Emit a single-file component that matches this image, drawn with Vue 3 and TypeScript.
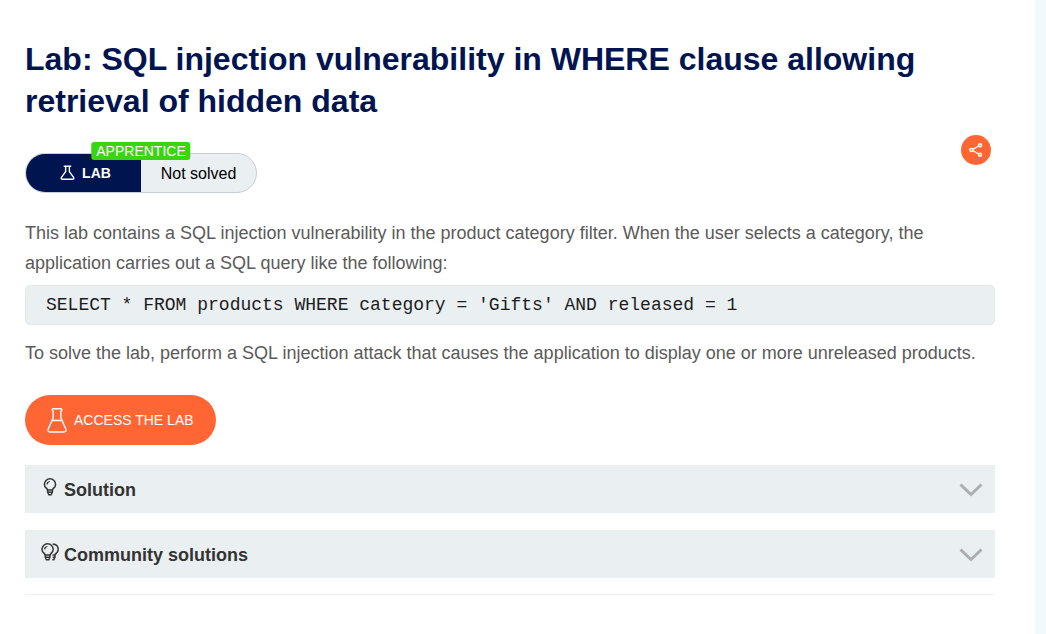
<script setup lang="ts">
import { ref } from 'vue'

interface Panel {
  id: string
  title: string
  double: boolean
}

const panels: Panel[] = [
  { id: 'solution', title: 'Solution', double: false },
  { id: 'community', title: 'Community solutions', double: true },
]

const query = "SELECT * FROM products WHERE category = 'Gifts' AND released = 1"
const selected = ref<string | null>(null)

function toggle(id: string): void {
  selected.value = selected.value === id ? null : id
}
</script>

<template>
  <div class="page">
    <main class="content">
      <h1>Lab: SQL injection vulnerability in WHERE clause allowing retrieval of hidden data</h1>

      <div class="meta">
        <div class="status">
          <span class="level">APPRENTICE</span>
          <span class="kind">
            <svg width="15" height="16" viewBox="0 0 16 16" fill="none" stroke="#fff" stroke-width="1.5" stroke-linejoin="round" aria-hidden="true">
              <path d="M4 .8h8M6 1v5.600L1.500 12.600q-.8 2 1 2h11q1.800 0 1-2L10 6.600V1" />
            </svg>
            LAB
          </span>
          <span class="state">Not solved</span>
        </div>
        <button class="share" type="button" aria-label="Share">
          <svg width="14" height="14" viewBox="0 0 14 14" fill="none" stroke="#fff" stroke-width="1.400" aria-hidden="true">
            <circle cx="2.300" cy="7" r="1.500" />
            <circle cx="11" cy="2.300" r="1.500" />
            <circle cx="11" cy="11.700" r="1.500" />
            <path d="M3.700 6.300 9.700 3M3.700 7.700l6 3.300" />
          </svg>
        </button>
      </div>

      <p>This lab contains a SQL injection vulnerability in the product category filter. When the user selects a category, the application carries out a SQL query like the following:</p>
      <pre class="query"><code>{{ query }}</code></pre>
      <p>To solve the lab, perform a SQL injection attack that causes the application to display one or more unreleased products.</p>

      <a class="access" href="#lab">
        <svg width="20" height="25" viewBox="0 0 20 25" fill="none" stroke="#fff" stroke-width="1.400" stroke-linejoin="round" aria-hidden="true">
          <path d="M6.200.8h7.600q1 0 1 1.200t-1 1.200v6.600l5 11.200q.9 3-1.800 3H3q-2.700 0-1.800-3l5-11.200V3.200q-1 0-1-1.200t1-1.200zM5.400 12.500h9.200" />
        </svg>
        ACCESS THE LAB
      </a>

      <section class="panels">
        <button
          v-for="panel in panels"
          :key="panel.id"
          class="panel"
          type="button"
          :aria-expanded="selected === panel.id"
          @click="toggle(panel.id)"
        >
          <svg class="bulb" width="18" height="18" viewBox="0 0 18 18" fill="none" stroke="#333332" stroke-width="1.500" aria-hidden="true">
            <g v-if="panel.double">
              <path d="M4.200 11.900c0-1.300-3.200-2.300-3.200-5.500a5.600 5.600 0 0 1 11.200 0c0 3.200-3.200 4.200-3.200 5.500z" />
              <path d="M4.200 11.900v2.300l1.200 2.500h2.400l1.200-2.500v-2.300M4.200 14.300h4.800" stroke-width="1.400" />
              <path d="M3.600 6.400q.2-2.500 2.800-2.900" stroke-width="1.200" />
              <path d="M11.700.9c3.500.2 5.500 2.300 5.500 5.500 0 3.200-3.200 4.200-3.200 5.500h-2.500M14 11.900v2.300l-1.200 2.500h-1.500M11.700 14.300h2.300" stroke-width="1.500" />
            </g>
            <g v-else>
              <path d="M6.600 11.900c0-1.300-3.200-2.300-3.200-5.500a5.600 5.600 0 0 1 11.200 0c0 3.200-3.200 4.200-3.200 5.500z" />
              <path d="M6.600 11.900v2.300l1.200 2.500h2.400l1.200-2.500v-2.300M6.600 14.300h4.800" stroke-width="1.400" />
              <path d="M6 6.400q.2-2.500 2.800-2.900" stroke-width="1.200" />
            </g>
          </svg>
          <span class="title">{{ panel.title }}</span>
          <svg width="24" height="14" viewBox="0 0 24 14" fill="none" stroke="#acadae" stroke-width="3" aria-hidden="true">
            <path d="m1.500 1.500 10.500 10L22.500 1.500" />
          </svg>
        </button>
      </section>
      <hr />
    </main>
  </div>
</template>

<style>
body {
  background: #f0fafd;
}
</style>

<style scoped>
.page {
  min-height: 100vh;
  margin-right: 11px;
  background: #fff;
  box-sizing: border-box;
  font-family: "Liberation Sans", Arial, sans-serif;
}

.content {
  padding: 38px 40px 38px 25px;
}

h1 {
  margin: 0;
  color: #00144f;
  font-size: 32px;
  line-height: 42px;
}

.meta {
  display: flex;
  justify-content: space-between;
  align-items: flex-start;
  padding: 13px 4px 0 0;
}

.status {
  position: relative;
  display: grid;
  grid-template-columns: 1fr 1fr;
  grid-template-rows: 100%;
  box-sizing: border-box;
  width: 232px;
  height: 40px;
  margin-top: 18px;
  border: 1px solid #c9d0d1;
  border-radius: 20px;
  background: #eaeff2;
  font-size: 16px;
}

.kind {
  display: flex;
  box-sizing: border-box;
  align-items: center;
  justify-content: center;
  gap: 7px;
  padding: 0 0 1px 4px;
  border-radius: 19px 0 0 19px;
  background: #00144f;
  color: #fff;
  font-size: 14px;
  font-weight: 700;
}

.state {
  color: #000;
  line-height: 40px;
  text-align: center;
}

.level {
  position: absolute;
  top: -12px;
  left: 50%;
  padding: 0 5px;
  border-radius: 3px;
  background: #3ad50f;
  color: #fff;
  font-size: 14px;
  line-height: 18px;
  transform: translateX(-50%);
}

.share {
  display: flex;
  align-items: center;
  justify-content: center;
  width: 30px;
  height: 30px;
  padding: 0;
  border: 0;
  border-radius: 50%;
  background: #ff6633;
}

p {
  margin: 25px 0 0;
  color: #5a5a5a;
  font-size: 18px;
  line-height: 30px;
}

.query {
  margin: 7px 0 0;
  padding: 0 20px;
  overflow-x: auto;
  border: 1px solid #e3e8ea;
  border-radius: 5px;
  background: #eaeff2;
  color: #1c1c1c;
  font-size: 18px;
  line-height: 38px;
}

.query code {
  display: block;
  font-family: "Courier New", "Liberation Mono", monospace;
}

.query + p {
  margin-top: 13px;
}

.access {
  display: flex;
  align-items: center;
  gap: 7px;
  box-sizing: border-box;
  width: fit-content;
  height: 50px;
  margin: 27px 0 20px;
  padding: 0 22px;
  border-radius: 25px;
  background: #ff6633;
  color: #fff;
  font-size: 14px;
  text-decoration: none;
}

.panels {
  display: flex;
  flex-direction: column;
  gap: 17px;
}

.panel {
  display: flex;
  align-items: center;
  width: 100%;
  height: 48px;
  margin: 0;
  padding: 2px 12px 0 16px;
  border: 0;
  background: #eaeff2;
  color: #333332;
  font-family: inherit;
  font-size: 18px;
  font-weight: 700;
  text-align: left;
}

.bulb {
  margin-bottom: 6px;
}

.title {
  flex: 1;
  padding-left: 5px;
}

hr {
  height: 1px;
  margin: 16px 0 0;
  border: 0;
  background: #f0f2f2;
}
</style>
